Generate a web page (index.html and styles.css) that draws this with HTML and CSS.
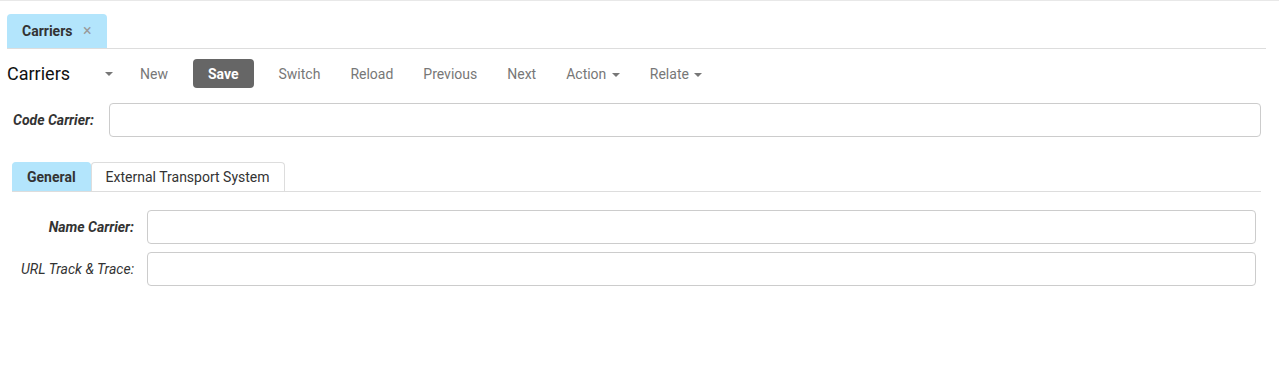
FILE: index.html
```html
<!DOCTYPE html>
<html>
<head>
  <title>Carriers</title>
  <link rel="stylesheet" href="styles.css">
</head>
<body>
  <div class="page">
    <div class="doc-tabs">
      <div class="doc-tab">Carriers <span class="close">&times;</span></div>
    </div>

    <div class="toolbar">
      <span class="title">Carriers</span>
      <span class="caret title-caret"></span>
      <button class="btn">New</button>
      <button class="btn btn-save">Save</button>
      <button class="btn">Switch</button>
      <button class="btn">Reload</button>
      <button class="btn">Previous</button>
      <button class="btn">Next</button>
      <button class="btn">Action <span class="caret"></span></button>
      <button class="btn">Relate <span class="caret"></span></button>
    </div>

    <div class="code-row">
      <label class="lbl-code">Code Carrier:</label>
      <input type="text" class="field">
    </div>

    <div class="notebook">
      <div class="nb-tabs">
        <div class="nb-tab active">General</div>
        <div class="nb-tab">External Transport System</div>
      </div>
      <div class="nb-page">
        <div class="form-row">
          <label class="lbl strong">Name Carrier:</label>
          <input type="text" class="field">
        </div>
        <div class="form-row">
          <label class="lbl">URL Track &amp; Trace:</label>
          <input type="text" class="field">
        </div>
      </div>
    </div>
  </div>
</body>
</html>
```
FILE: styles.css
```css
body {
  margin: 0;
  font-family: Roboto, "Liberation Sans", sans-serif;
  font-size: 14px;
  color: #333;
  background: #fff;
}
.page {
  border-top: 1px solid #e8e8e8;
  padding: 13px 13px 0 7px;
}
.doc-tabs {
  display: flex;
  border-bottom: 1px solid #ddd;
  height: 34px;
}
.doc-tab {
  background: #b3e5fc;
  border-radius: 4px 4px 0 0;
  width: 100px;
  box-sizing: border-box;
  padding: 0 0 0 15px;
  line-height: 34px;
  font-weight: bold;
  font-size: 14px;
  color: #333;
}
.close {
  color: #999;
  font-weight: normal;
  font-size: 16px;
  margin-left: 7px;
}
.toolbar {
  display: flex;
  align-items: center;
  height: 29px;
  margin-top: 10px;
}
.title {
  font-size: 18px;
  color: #111;
  width: 98px;
}
.caret {
  display: inline-block;
  width: 0;
  height: 0;
  border-left: 4px solid transparent;
  border-right: 4px solid transparent;
  border-top: 4px solid #777;
  vertical-align: middle;
  margin-left: 2px;
}
.title-caret {
  margin: 0 12px 0 0;
}
.btn {
  font-family: inherit;
  font-size: 14px;
  color: #777;
  background: none;
  border: none;
  padding: 0 15px;
  height: 29px;
  margin: 0;
  cursor: pointer;
}
.btn-save {
  background: #666;
  color: #fff;
  font-weight: bold;
  border-radius: 4px;
  padding: 0 15px;
  margin: 0 10px;
}
.code-row {
  display: flex;
  align-items: center;
  margin-top: 15px;
  padding-left: 6px;
  padding-right: 5px;
}
.lbl-code {
  font-weight: bold;
  font-style: italic;
  width: 96px;
}
.field {
  flex: 1;
  height: 34px;
  box-sizing: border-box;
  border: 1px solid #ccc;
  border-radius: 4px;
  font-family: inherit;
  font-size: 14px;
  padding: 0 10px;
}
.notebook {
  margin-top: 25px;
  padding-left: 5px;
  padding-right: 5px;
}
.nb-tabs {
  display: flex;
  border-bottom: 1px solid #ddd;
  height: 29px;
}
.nb-tab {
  padding: 0 14px;
  line-height: 28px;
  border: 1px solid #ddd;
  border-bottom: none;
  border-radius: 4px 4px 0 0;
  color: #333;
}
.nb-tab.active {
  background: #b3e5fc;
  border-color: #b3e5fc;
  font-weight: bold;
}
.nb-page {
  padding: 18px 5px 0 0;
}
.form-row {
  display: flex;
  align-items: center;
  margin-bottom: 8px;
}
.lbl {
  width: 122px;
  text-align: right;
  padding-right: 13px;
  font-style: italic;
}
.lbl.strong {
  font-weight: bold;
}
```
